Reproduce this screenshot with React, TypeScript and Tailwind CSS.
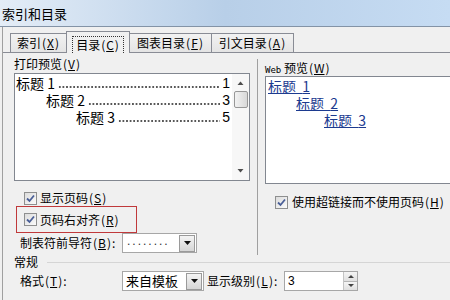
import React from "react"

const cjk = "font-['Microsoft_YaHei','Noto_Sans_CJK_SC',sans-serif]"

function Key({ k }: { k: string }) {
    return (
        <span className="inline-flex">
            <span className="w-[6px] text-center">(</span>
            <span className="min-w-[7px] text-center underline">{k}</span>
            <span className="w-[6px] text-center">)</span>
        </span>
    )
}

function Check() {
    return (
        <span className="inline-flex w-[13px] h-[13px] border border-[#8e8f8f] bg-gradient-to-br from-[#dcdcdc] to-[#fbfbfb] items-center justify-center shrink-0">
            <svg width="9" height="9" viewBox="0 0 9 9">
                <path d="M1 4.5 L3.5 7 L8 1.5" fill="none" stroke="#4a5f97" strokeWidth="1.8" />
            </svg>
        </span>
    )
}

function DropButton() {
    return (
        <span className="flex w-[16px] h-[17px] border border-[#9a9a9a] bg-gradient-to-b from-[#f4f4f4] to-[#d6d6d6] items-center justify-center shrink-0">
            <svg width="7" height="4" viewBox="0 0 7 4">
                <path d="M0 0 H7 L3.5 4 Z" fill="#111" />
            </svg>
        </span>
    )
}

function Tab({ label, k, active, w }: { label: string; k: string; active?: boolean; w: string }) {
    if (active) {
        return (
            <div className={`h-[22px] px-[5px] pt-[4px] bg-[#f0f0f0] border border-b-0 border-[#898c95] -mb-px -ml-px relative z-10 ${w}`}>
                <div className="h-[17px] border border-b-0 border-dotted border-[#333] flex items-center justify-center leading-none">
                    {label}
                    <Key k={k} />
                </div>
            </div>
        )
    }
    return (
        <div className={`h-[19px] bg-gradient-to-b from-[#f2f2f2] to-[#e4e4e4] border border-b-0 border-[#898c95] flex items-center justify-center leading-none -ml-px first:ml-0 ${w}`}>
            {label}
            <Key k={k} />
        </div>
    )
}

function TocLine({ indent, n, page }: { indent: string; n: string; page: string }) {
    return (
        <div className={`flex items-end h-[17px] text-[14px] leading-[17px] ${indent}`}>
            <span className="whitespace-nowrap shrink-0">标题 {n}</span>
            <span className="flex-1 min-w-0 h-[2px] mb-[4px] ml-[3px] bg-[radial-gradient(circle,#333_0.6px,transparent_1px)] bg-[length:3.6px_2px] bg-repeat-x" />
            <span className="shrink-0 font-['Liberation_Sans',sans-serif] pl-[2px]">{page}</span>
        </div>
    )
}

function WebLine({ indent, n }: { indent: string; n: string }) {
    return (
        <div className={`h-[17px] text-[14px] leading-[17px] ${indent}`}>
            <span className="underline text-[#1c3a8f] whitespace-nowrap">标题&nbsp; {n}</span>
        </div>
    )
}

export default function App() {
    return (
        <div className={`w-[450px] h-[300px] overflow-hidden bg-[#f0f0f0] text-[12px] text-black ${cjk}`}>
            {/* Title bar */}
            <div className="h-[27px] bg-gradient-to-r from-[#e4edf7] via-[#b8cfe8] to-[#c6dcf3] border-b border-[#8393a6] flex items-center pl-[2px] pt-[2px] text-[13px]">
                索引和目录
            </div>

            <div className="ml-[2px] border-l border-[#a0a0a0] h-full">
                {/* Tabs */}
                <div className="flex items-end pl-[7px] pt-[4px]">
                    <Tab label="索引" k="X" w="w-[57px]" />
                    <Tab label="目录" k="C" active w="w-[64px]" />
                    <Tab label="图表目录" k="F" w="w-[83px]" />
                    <Tab label="引文目录" k="A" w="w-[83px]" />
                </div>

                <div className="border-t border-[#898c95]">
                    <div className="flex h-[202px]">
                        {/* Left column */}
                        <div className="w-[254px] shrink-0 pl-[11px] pt-[4px]">
                            <div className="h-[14px] leading-[14px]">
                                打印预览<Key k="V" />
                            </div>
                            <div className="mt-[2px] w-[236px] h-[108px] border border-[#828790] bg-white flex">
                                <div className="flex-1 min-w-0 pl-[1px] pr-[2px] pt-[1px]">
                                    <TocLine indent="" n="1" page="1" />
                                    <TocLine indent="pl-[30px]" n="2" page="3" />
                                    <TocLine indent="pl-[60px]" n="3" page="5" />
                                </div>
                                <div className="w-[17px] shrink-0 bg-[#f7f7f7] flex flex-col items-center">
                                    <svg width="17" height="14" viewBox="0 0 17 14" className="mt-[2px]">
                                        <path d="M5.5 9 L8.5 5.5 L11.5 9 Z" fill="#4d4d4d" />
                                    </svg>
                                    <div className="w-[14px] h-[17px] mt-[1px] rounded-[2px] border border-[#979797] bg-gradient-to-r from-[#f2f2f2] to-[#d8d8d8]" />
                                    <div className="flex-1" />
                                    <svg width="17" height="14" viewBox="0 0 17 14" className="mb-[2px]">
                                        <path d="M5.5 5 L8.5 8.5 L11.5 5 Z" fill="#4d4d4d" />
                                    </svg>
                                </div>
                            </div>

                            <div className="mt-[10px] ml-[10px] flex items-center gap-[3px] h-[14px]">
                                <Check />
                                <span>
                                    显示页码<Key k="S" />
                                </span>
                            </div>
                            <div className="mt-[1px] ml-[2px] w-[121px] h-[27px] border border-[#c0393b] flex items-center gap-[3px] pl-[7px]">
                                <Check />
                                <span>
                                    页码右对齐<Key k="R" />
                                </span>
                            </div>
                            <div className="flex items-center ml-[6px] h-[20px]">
                                <span className="w-[102px]">
                                    制表符前导符<Key k="B" />:
                                </span>
                                <div className="w-[75px] h-[20px] border border-[#a7a7a7] bg-white flex items-center pl-[4px] pr-px">
                                    <span className="flex-1 font-['Liberation_Sans',sans-serif] tracking-[2px] text-[#333] -mt-[4px]">........</span>
                                    <DropButton />
                                </div>
                            </div>
                        </div>

                        {/* Right column */}
                        <div className="flex-1 min-w-0 mt-[6px] border-l border-[#a0a0a0] pl-[7px] pt-[2px] -mr-[20px]">
                            <div className="h-[14px] leading-[14px] whitespace-nowrap">
                                <span className="font-['DejaVu_Sans_Mono',monospace] text-[9px]">Web</span> 预览<Key k="W" />
                            </div>
                            <div className="mt-[1px] h-[108px] border border-[#828790] bg-white pl-[2px] pt-[1px]">
                                <WebLine indent="" n="1" />
                                <WebLine indent="pl-[28px]" n="2" />
                                <WebLine indent="pl-[56px]" n="3" />
                            </div>
                            <div className="mt-[11px] ml-[10px] flex items-center gap-[4px] h-[14px] whitespace-nowrap">
                                <Check />
                                <span>
                                    使用超链接而不使用页码<Key k="H" />
                                </span>
                            </div>
                        </div>
                    </div>

                    {/* General */}
                    <div className="flex items-center pl-[11px] h-[14px]">
                        <span>常规</span>
                        <div className="flex-1 ml-[9px] border-t border-[#d5d5d5]" />
                    </div>
                    <div className="flex items-center pl-[17px] mt-[2px] h-[20px]">
                        <span className="w-[102px]">
                            格式<Key k="T" />:
                        </span>
                        <div className="w-[82px] h-[20px] border border-[#a7a7a7] bg-white flex items-center pl-[3px] pr-px text-[13px]">
                            <span className="flex-1">来自模板</span>
                            <DropButton />
                        </div>
                        <span className="ml-[3px] w-[77px] whitespace-nowrap">
                            显示级别<Key k="L" />:
                        </span>
                        <div className="w-[74px] h-[20px] border border-[#a7a7a7] bg-white flex items-center pl-[3px]">
                            <span className="flex-1 font-['Liberation_Sans',sans-serif]">3</span>
                            <div className="w-[14px] h-[18px] flex flex-col border-l border-[#c4c4c4]">
                                <div className="flex-1 bg-gradient-to-b from-[#f5f5f5] to-[#e0e0e0] border-b border-[#b5b5b5] flex items-center justify-center">
                                    <svg width="6" height="3" viewBox="0 0 6 3"><path d="M0 3 L3 0 L6 3 Z" fill="#444" /></svg>
                                </div>
                                <div className="flex-1 bg-gradient-to-b from-[#f5f5f5] to-[#e0e0e0] flex items-center justify-center">
                                    <svg width="6" height="3" viewBox="0 0 6 3"><path d="M0 0 L6 0 L3 3 Z" fill="#444" /></svg>
                                </div>
                            </div>
                        </div>
                    </div>
                </div>
            </div>
        </div>
    )
}
